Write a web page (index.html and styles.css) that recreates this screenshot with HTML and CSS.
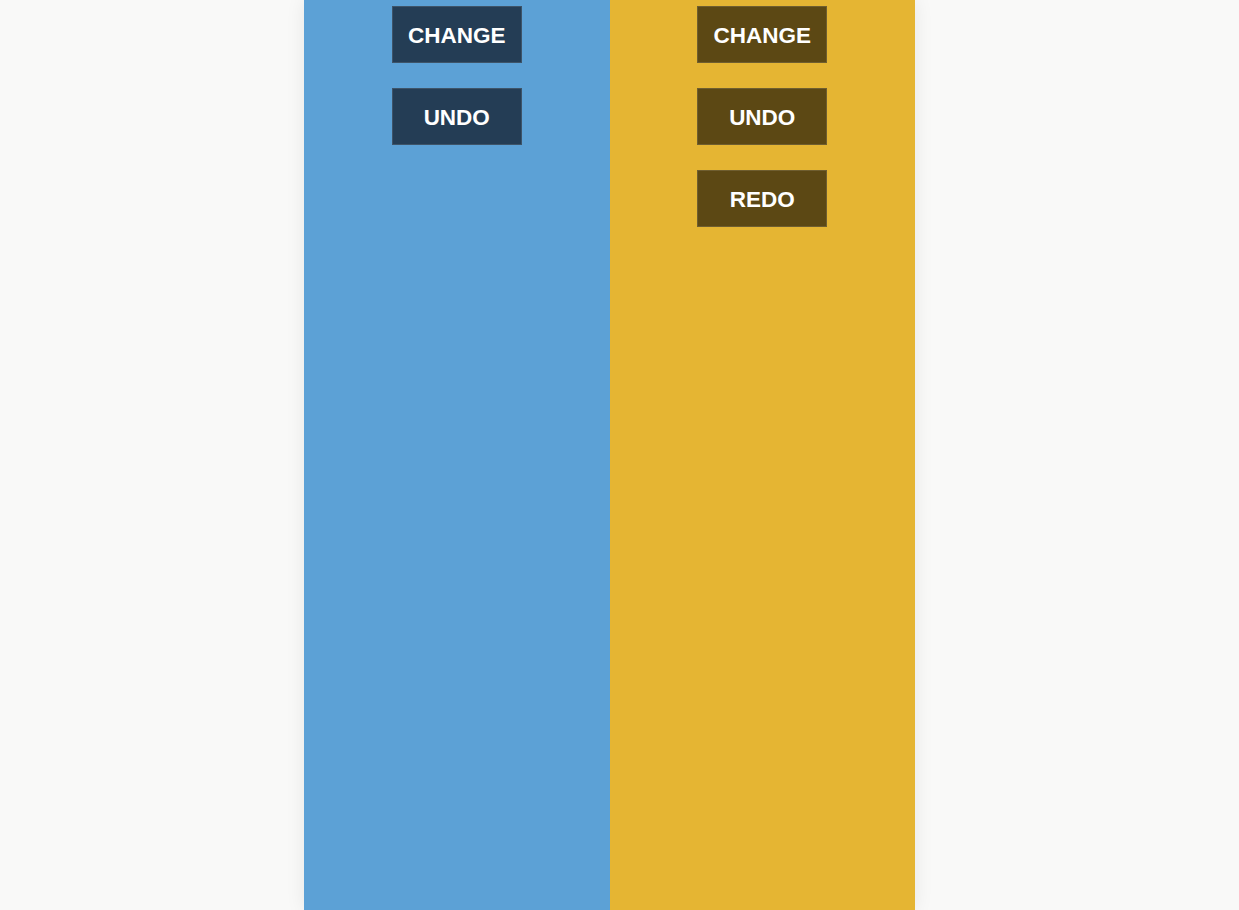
FILE: index.html
```html
<!DOCTYPE html>
<html>
<head>
<meta charset="utf-8">
<link rel="stylesheet" href="styles.css">
</head>
<body>
<div class="board">
  <div class="col col-blue">
    <button class="btn">CHANGE</button>
    <button class="btn">UNDO</button>
  </div>
  <div class="col col-yellow">
    <button class="btn">CHANGE</button>
    <button class="btn">UNDO</button>
    <button class="btn">REDO</button>
  </div>
</div>
</body>
</html>
```
FILE: styles.css
```css
html, body {
  margin: 0;
  padding: 0;
  height: 100%;
  background: #f9f9f8;
  overflow: hidden;
}
body {
  padding-right: 20px;
  box-sizing: border-box;
}
.board {
  width: 611px;
  height: 910px;
  margin: 0 auto;
  display: flex;
  box-shadow: 0 0 18px rgba(0, 0, 0, 0.08);
}
.col {
  flex: 1;
  display: flex;
  flex-direction: column;
  align-items: center;
  gap: 25px;
  padding-top: 6px;
}
.col-blue { background: #5ca1d6; }
.col-yellow { background: #e5b533; }
.btn {
  width: 130px;
  height: 57px;
  border: 1px solid rgba(255, 255, 255, 0.12);
  font-family: "Liberation Sans", Arial, sans-serif;
  font-weight: bold;
  font-size: 22.5px;
  color: #ffffff;
  padding: 3px 0 0 0;
  cursor: pointer;
}
.col-blue .btn { background: #243d55; }
.col-yellow .btn { background: #5c4814; }
```
